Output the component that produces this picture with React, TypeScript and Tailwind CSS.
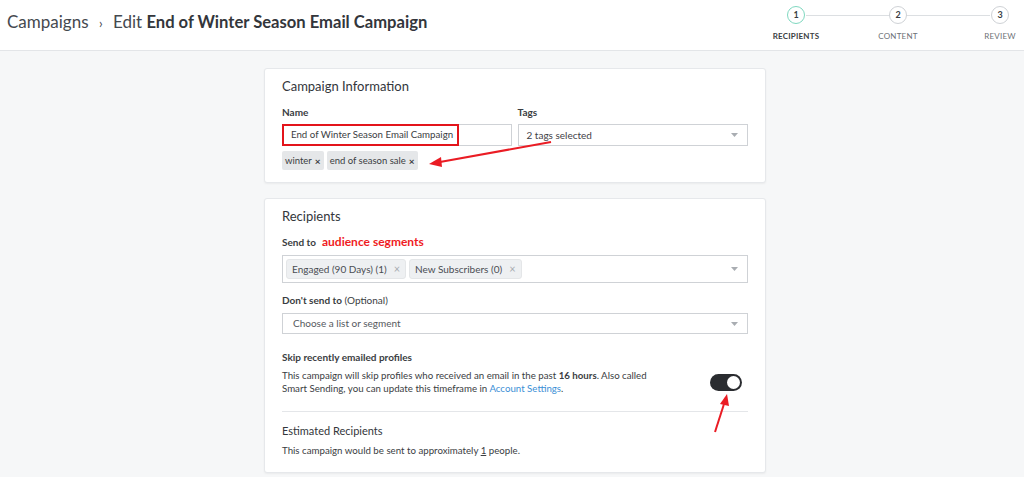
import React from "react";

const font = { fontFamily: "Lato, 'Liberation Sans', sans-serif" };

function Caret() {
  return (
    <svg width="7" height="4" viewBox="0 0 7 4" className="shrink-0">
      <path d="M0 0h7L3.5 4z" fill="#a9adb2" />
    </svg>
  );
}

function Chip({ label, light = false }: { label: string; light?: boolean }) {
  return (
    <span
      className={
        light
          ? "inline-flex h-[20px] items-center gap-[7px] rounded-[3px] border border-[#e4e6e8] bg-[#eef0f2] px-[5px] text-[10px] leading-[12px] text-[#4a4d52]"
          : "inline-flex h-[19px] items-center gap-[3px] rounded-[2px] bg-[#e5e7e9] px-[3px] text-[9.5px] leading-[12px] text-[#3a3d42]"
      }
    >
      {label}
      <span className={light ? "text-[11px] text-[#a7abb0]" : "text-[10px] font-bold text-[#3a3d42]"}>×</span>
    </span>
  );
}

function Step({ n, label, active = false }: { n: string; label: string; active?: boolean }) {
  return (
    <div className="flex w-[60px] flex-col items-center">
      <div
        className={
          "flex h-[18px] w-[18px] items-center justify-center rounded-full border-[1.5px] bg-white text-[9px] font-bold text-[#3b3e42] " +
          (active ? "border-[#7fd8c0]" : "border-[#cfd2d6]")
        }
      >
        {n}
      </div>
      <div className={"mt-[6px] text-[8px] tracking-[0.2px] " + (active ? "font-bold text-[#3b3e42]" : "text-[#6d7176]")}>
        {label}
      </div>
    </div>
  );
}

export default function App() {
  return (
    <div className="relative h-[477px] w-[1024px] overflow-hidden bg-[#f6f7f8]" style={font}>
      {/* header */}
      <div className="flex h-[51px] items-start justify-between border-b border-[#e3e5e8] bg-white">
        <div className="pl-[7px] pt-[9px] text-[17px] text-[#45494f]">
          Campaigns <span className="mx-[6px] text-[13px]">›</span> Edit{" "}
          <span className="text-[16.6px] font-bold text-[#33363b]">End of Winter Season Email Campaign</span>
        </div>
        <div className="relative mr-[-6px] flex pt-[6px]">
          <div className="absolute left-[40px] right-[40px] top-[15px] h-px bg-[#dcdfe2]" />
          <div className="relative flex gap-[42px]">
            <Step n="1" label="RECIPIENTS" active />
            <Step n="2" label="CONTENT" />
            <Step n="3" label="REVIEW" />
          </div>
        </div>
      </div>

      {/* body */}
      <div className="ml-[264px] w-[502px] pt-[17px]">
        {/* campaign info */}
        <div className="rounded-[3px] border border-[#e6e8eb] bg-white px-[17px] pb-[12px] pt-[10px] shadow-[0_1px_2px_rgba(0,0,0,0.05)]">
          <div className="text-[13px] leading-[14px] text-[#33363b]">Campaign Information</div>
          <div className="mt-[13px] flex gap-[6px]">
            <div className="w-[230px]">
              <div className="text-[10px] font-bold leading-[12px] text-[#3a3d42]">Name</div>
              <div className="mt-[6px] flex h-[22px] items-center border border-[#cfd2d6] bg-white">
                <div className="-ml-px -mt-px flex h-[22px] w-[177px] items-center whitespace-nowrap border-2 border-[#e3141b] pl-[7px] text-[9.7px] text-[#3a3d42]">
                  End of Winter Season Email Campaign
                </div>
              </div>
            </div>
            <div className="w-[231px]">
              <div className="text-[10px] font-bold leading-[12px] text-[#3a3d42]">Tags</div>
              <div className="mt-[6px] flex h-[22px] items-center justify-between border border-[#cfd2d6] bg-white pl-[8px] pr-[9px] text-[10px] text-[#3f4247]">
                2 tags selected
                <Caret />
              </div>
            </div>
          </div>
          <div className="mt-[5px] flex gap-[3px]">
            <Chip label="winter" />
            <Chip label="end of season sale" />
          </div>
        </div>

        {/* recipients */}
        <div className="mt-[15px] rounded-[3px] border border-[#e6e8eb] bg-white px-[17px] pb-[16px] pt-[10px] shadow-[0_1px_2px_rgba(0,0,0,0.05)]">
          <div className="text-[13px] leading-[14px] text-[#33363b]">Recipients</div>
          <div className="mt-[12px] flex h-[14px] items-center gap-[6px]">
            <span className="text-[10px] font-bold leading-[12px] text-[#3a3d42]">Send to</span>
            <span className="text-[12px] font-bold leading-[14px] text-[#ef1c24]">audience segments</span>
          </div>
          <div className="mt-[6px] flex h-[28px] items-center justify-between border border-[#cfd2d6] bg-white pl-[3px] pr-[9px]">
            <div className="flex gap-[3px]">
              <Chip label="Engaged (90 Days) (1)" light />
              <Chip label="New Subscribers (0)" light />
            </div>
            <Caret />
          </div>
          <div className="mt-[11px] text-[10px] leading-[12px] text-[#3a3d42]">
            <span className="font-bold">Don't send to</span> (Optional)
          </div>
          <div className="mt-[7px] flex h-[21px] items-center justify-between border border-[#cfd2d6] bg-white pl-[10px] pr-[9px] text-[10px] text-[#55595e]">
            Choose a list or segment
            <Caret />
          </div>
          <div className="mt-[17px] text-[10px] font-bold leading-[12px] text-[#3a3d42]">Skip recently emailed profiles</div>
          <div className="mt-[6px] flex items-center justify-between pr-[6px]">
            <div className="text-[9.7px] leading-[13px] text-[#3a3d42]">
              This campaign will skip profiles who received an email in the past <b>16 hours</b>. Also called
              <br />
              Smart Sending, you can update this timeframe in <span className="text-[#3b8fd6]">Account Settings</span>.
            </div>
            <div className="flex h-[17px] w-[32px] items-center justify-end rounded-full bg-[#2a2c30] pr-[2px]">
              <div className="h-[13px] w-[13px] rounded-full bg-white" />
            </div>
          </div>
          <div className="mt-[16px] h-px bg-[#e4e6e9]" />
          <div className="mt-[12px] text-[11px] leading-[14px] text-[#33363b]">Estimated Recipients</div>
          <div className="mt-[6px] text-[9.7px] leading-[12px] text-[#3a3d42]">
            This campaign would be sent to approximately <span className="underline">1</span> people.
          </div>
        </div>
      </div>

      {/* annotation arrows */}
      <svg className="pointer-events-none absolute left-0 top-0" width="1024" height="477">
        <line x1="551" y1="142" x2="440" y2="162" stroke="#ea1c24" strokeWidth="2" />
        <path d="M429 164 L441 157 L442 167 Z" fill="#ea1c24" />
        <line x1="715" y1="432" x2="724" y2="404" stroke="#ea1c24" strokeWidth="2" />
        <path d="M727 394 L729 406 L720 404 Z" fill="#ea1c24" />
      </svg>
    </div>
  );
}
